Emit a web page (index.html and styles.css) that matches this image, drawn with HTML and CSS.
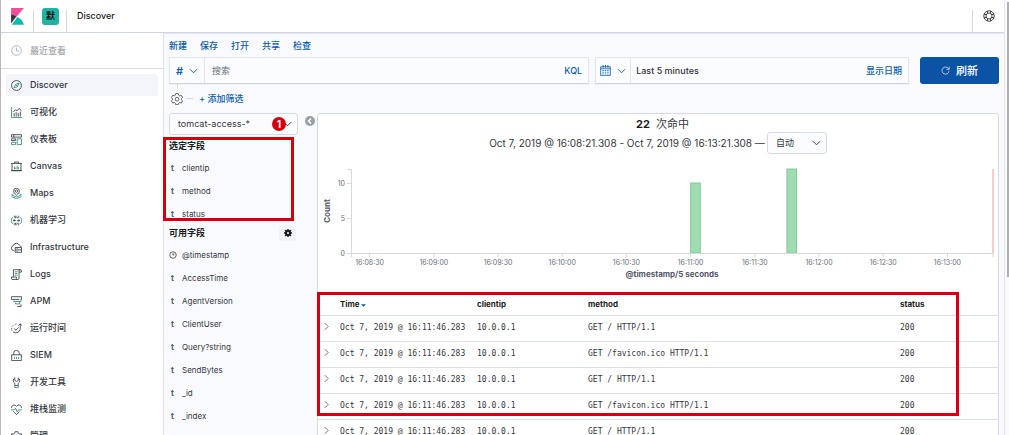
FILE: index.html
```html
<!DOCTYPE html>
<html lang="zh-CN">
<head>
<meta charset="utf-8">
<title>Discover - Kibana</title>
<link rel="stylesheet" href="styles.css">
</head>
<body>
<div class="app">
  <header class="header">
    <a class="logo" href="#" aria-label="Kibana">
      <svg viewBox="0 0 24 32" width="13" height="17"><path fill="#f04e98" d="M0 0v28.8L24 0z"/><path fill="#343741" d="M0 12v16.8l9.5-13.4A24 24 0 0 0 0 12z"/><path fill="#00bfb3" d="M12 17 1 31.5h23C23 25.500 18 20 12 17z"/></svg>
    </a>
    <button class="space" type="button"><span class="space-badge">默</span></button>
    <span class="crumb">Discover</span>
    <button class="help" type="button" aria-label="Help">
      <svg class="icon" viewBox="0 0 16 16"><circle cx="8" cy="8" r="7"/><circle cx="8" cy="8" r="4"/><path d="M6 1.500v3M10 1.500v3M6 11.500v3M10 11.500v3M1.500 6h3M1.500 10h3M11.500 6h3M11.500 10h3"/></svg>
    </button>
  </header>

  <nav class="nav">
    <a class="nav-item recent" href="#"><svg class="icon" viewBox="0 0 16 16"><circle cx="8" cy="8" r="7"/><path d="M8 3.500V8.500h4"/></svg>最近查看</a>
    <div class="nav-list">
      <a class="nav-item active" href="#"><svg class="icon" viewBox="0 0 16 16"><circle cx="8" cy="8" r="7.200"/><path class="teal" d="M11.500 4.500 9.500 9.500 4.500 11.500 6.500 6.500zM7 7l2 2"/></svg>Discover</a>
      <a class="nav-item" href="#"><svg class="icon" viewBox="0 0 16 16"><path class="teal" d="M.6 0v15.400H16"/><path d="M3 7.500 6.500 4 9 5.500 12 2l3 3.500M4.500 9v5M7.500 7.500v6.500M10.500 8.500v5.500M13.500 6.500v7.500"/></svg>可视化</a>
      <a class="nav-item" href="#"><svg class="icon" viewBox="0 0 16 16"><path d="M.6 1h14.800v3.500H.6zM4 1v3.500M.6 7h6v2.500h-6z"/><path class="teal" d="M.6 12h6v3.400h-6zM9 7h6.400v8.400H9z"/></svg>仪表板</a>
      <a class="nav-item" href="#"><svg class="icon" viewBox="0 0 16 16"><path d="M0 3.500h16M1.500 3.500v10.500h13V3.500M0 14h16M5 3.500V1.500h6v2"/><path class="teal" d="M5 8v4M7 9.500V12M9 7v5M11 9v3"/></svg>Canvas</a>
      <a class="nav-item" href="#"><svg class="icon" viewBox="0 0 16 16"><path d="M8 10.500C5 8 3.800 6.500 3.800 4.500a4.200 4.200 0 0 1 8.400 0c0 2-1.200 3.500-4.200 6z"/><circle cx="8" cy="4.500" r="1.800"/><path class="teal" d="M3.500 8.500.8 10 8 13.200 15.200 10l-2.700-1.500M.8 12.500 8 15.600l7.200-3.100"/></svg>Maps</a>
      <a class="nav-item" href="#"><svg class="icon" viewBox="0 0 16 16"><path class="teal" d="M3.500 3C1 4 .6 6 .6 8s.4 4 2.900 5M12.500 3C15 4 15.400 6 15.400 8s-.4 4-2.900 5M4.500 6v4M11.500 6v4"/><path d="M5.500 1v3h1.800V1M8.800 4h1.800V1M5.500 15v-3h1.800v3M8.800 12h1.800v3M3 8h4M9 8h4"/></svg>机器学习</a>
      <a class="nav-item" href="#"><svg class="icon" viewBox="0 0 16 16"><path d="M4 12.500A3.700 3.700 0 0 1 3.500 5.200 4.500 4.500 0 0 1 12 4.500c1.500.5 2.500 1.700 2.500 3"/><path d="M6 8h9.400v7H6zM6 11.500h9.400"/><path class="teal" d="M8 9.800h2M8 13.300h2"/></svg>Infrastructure</a>
      <a class="nav-item" href="#"><svg class="icon" viewBox="0 0 16 16"><path d="M3.500 11.500V1h10a1.700 1.700 0 0 1 1.700 1.700V4.500h-3.500v8.500a2.300 2.300 0 0 1-2.300 2.300H2A1.600 1.600 0 0 1 .6 13.700v-2h7.200v2a1.600 1.600 0 0 0 1.600 1.600M11.700 4.500V2.700A1.700 1.700 0 0 1 13.500 1"/><path class="teal" d="M5.500 4h4M5.500 6.500h4M5.500 9h4"/></svg>Logs</a>
      <a class="nav-item" href="#"><svg class="icon" viewBox="0 0 16 16"><path d="M12 5H.6V1h14.800v4H14M9 15.400h5.500V12"/><path class="teal" d="M4 6.500V8h10.500V5M6.500 9.500V11.500h6V8"/></svg>APM</a>
      <a class="nav-item" href="#"><svg class="icon" viewBox="0 0 16 16"><path d="M13.500 1.500v6A6.500 6.500 0 0 1 3 13M10.800 3.800 13.500 1l2.300 2.800M4.500 8l2.500 2.500 4-4"/><path class="teal" d="M1.500 11.500A6.500 6.500 0 0 1 1 7M2 5l1.500-1.800M5.500 2 8 1.500"/></svg>运行时间</a>
      <a class="nav-item" href="#"><svg class="icon" viewBox="0 0 16 16"><path d="M1 7h14v8.400H1zM4 7V4.500a4 4 0 0 1 8 0V7"/><path class="teal" d="M5 10v3M8 10v3M11 10v3"/></svg>SIEM</a>
      <a class="nav-item" href="#"><svg class="icon" viewBox="0 0 16 16"><path d="M5.500 1.200A4.500 4.500 0 0 0 5.500 9v3.500h5V9a4.500 4.500 0 0 0 0-7.800V5L8 6.500 5.500 5z"/><path class="teal" d="M5.500 13v2.400h5V13"/></svg>开发工具</a>
      <a class="nav-item" href="#"><svg class="icon" viewBox="0 0 16 16"><path d="M1 6C.2 1.500 5.500 0 8 3.500 10.500 0 15.800 1.500 15 6M3.500 11 8 15.400l4.500-4.400"/><path class="teal" d="M0 8.500h4.500L6.500 6l2.500 5.500 2-3h5"/></svg>堆栈监测</a>
      <a class="nav-item" href="#"><svg class="icon" viewBox="0 0 16 16"><path d="M6 1h4l.5 2.200L13 4.500l2.200-.5V8l-2 1 .2 2.500-2.400 2-1 2H6l-1-2-2.400-2L2.800 9l-2-1V4l2.200.5 2.500-1.300z"/><circle class="teal" cx="8" cy="8.500" r="2.500"/></svg>管理</a>
    </div>
  </nav>

  <main class="main">
    <div class="menu">
      <a href="#">新建</a><a href="#">保存</a><a href="#">打开</a><a href="#">共享</a><a href="#">检查</a>
    </div>

    <div class="toolbar">
      <div class="query box">
        <button class="addon saved" type="button" aria-label="Saved queries"><b>#</b><svg class="chev" viewBox="0 0 10 6"><path d="m1 1 4 4 4-4"/></svg></button>
        <input class="search" type="text" placeholder="搜索" aria-label="搜索">
        <button class="text-button" type="button">KQL</button>
      </div>
      <div class="dates box">
        <button class="addon quick" type="button" aria-label="Quick dates"><svg class="icon" viewBox="0 0 16 16"><path d="M1 2.500h14v13H1zM1 5.500h14M4.500 0v4M11.500 0v4M8 0v4M3.500 8h2M7 8h2M10.500 8h2M3.500 10.500h2M7 10.500h2M10.500 10.500h2M3.500 13h2M7 13h2M10.500 13h2"/></svg><svg class="chev" viewBox="0 0 10 6"><path d="m1 1 4 4 4-4"/></svg></button>
        <button class="range" type="button">Last 5 minutes</button>
        <button class="text-button" type="button">显示日期</button>
      </div>
      <button class="refresh" type="button"><svg class="icon" viewBox="0 0 16 16"><path d="M13.500 5A6.300 6.300 0 1 0 14.300 9M14.500 1v5H9.500"/></svg>刷新</button>
    </div>

    <div class="filters">
      <button class="filter-gear" type="button" aria-label="Filter options"><svg class="icon" viewBox="0 0 16 16"><path d="M6.300.8h3.400l.5 2.100 1.500.9 2.100-.7 1.600 3-1.500 1.400v1.500l1.500 1.400-1.600 3-2.100-.7-1.500.9-.5 2H6.300l-.5-2-1.500-.9-2.100.7-1.600-3L2.100 9V7.500L.6 6.100l1.600-3 2.100.7 1.500-.9z"/><circle cx="8" cy="8.200" r="2.500"/></svg></button>
      <span class="dash"></span>
      <a href="#">+ 添加筛选</a>
    </div>

    <div class="content">
      <aside class="fields">
        <div class="picker">
          <select class="select" aria-label="Index pattern"><option>tomcat-access-*</option></select>
          <svg class="chev" viewBox="0 0 10 6"><path d="m1 1 4 4 4-4"/></svg>
          <span class="step">1</span>
        </div>
        <section class="selected">
          <h2>选定字段</h2>
          <ul>
            <li><b>t</b>clientip</li>
            <li><b>t</b>method</li>
            <li><b>t</b>status</li>
          </ul>
          <div class="mark mark-fields"></div>
        </section>
        <section>
          <div class="fields-head">
            <h2>可用字段</h2>
            <button class="field-gear" type="button" aria-label="Field filter"><svg viewBox="0 0 16 16" width="8" height="8"><circle cx="8" cy="8" r="4" fill="none" stroke="#1a1c21" stroke-width="4"/><path d="M8 0v4M8 12v4M0 8h4M12 8h4M2.300 2.300l3 3M10.700 10.700l3 3M2.300 13.700l3-3M10.700 5.300l3-3" stroke="#1a1c21" stroke-width="3"/></svg></button>
          </div>
          <ul>
            <li><svg class="clock" viewBox="0 0 16 16"><circle cx="8" cy="8" r="6.500"/><path d="M8 4v4.500l3-2"/></svg>@timestamp</li>
            <li><b>t</b>AccessTime</li>
            <li><b>t</b>AgentVersion</li>
            <li><b>t</b>ClientUser</li>
            <li><b>t</b>Query?string</li>
            <li><b>t</b>SendBytes</li>
            <li><b>t</b>_id</li>
            <li><b>t</b>_index</li>
          </ul>
        </section>
      </aside>

      <button class="collapse" type="button" aria-label="Collapse fields"><svg viewBox="0 0 10 10" width="10" height="10"><circle cx="5" cy="5" r="5" fill="#98a0a8"/><path d="M6 2.500 3.500 5 6 7.500" fill="none" stroke="#fff" stroke-width="1.500"/></svg></button>

      <section class="panel">
        <div class="hits"><strong>22</strong>次命中</div>
        <div class="timeline">
          <label for="interval">Oct 7, 2019 @ 16:08:21.308 - Oct 7, 2019 @ 16:13:21.308 —</label>
          <div class="interval">
            <select class="select" id="interval"><option>自动</option></select>
            <svg class="chev" viewBox="0 0 10 6"><path d="m1 1 4 4 4-4"/></svg>
          </div>
        </div>

        <div class="chart">
          <svg class="plot" role="img" aria-label="Count by @timestamp">
            <g class="bars">
              <rect x="52.9%" y="14" width="1.500%" height="70"/>
              <rect x="67.900%" y="0" width="1.500%" height="84"/>
            </g>
            <line class="now" x1="100%" x2="100%" y1="0" y2="84"/>
            <g class="axis">
              <path d="M-4 .5H.5V88M-4 14.500H0M-4 49.500H0M-4 84.500H0"/>
              <line x1="0" x2="100%" y1="84.500" y2="84.500"/>
              <line x1="2.900%" x2="2.900%" y1="84" y2="88"/><line x1="12.900%" x2="12.900%" y1="84" y2="88"/>
              <line x1="22.900%" x2="22.900%" y1="84" y2="88"/><line x1="32.900%" x2="32.900%" y1="84" y2="88"/>
              <line x1="42.900%" x2="42.900%" y1="84" y2="88"/><line x1="52.900%" x2="52.900%" y1="84" y2="88"/>
              <line x1="62.900%" x2="62.900%" y1="84" y2="88"/><line x1="72.900%" x2="72.900%" y1="84" y2="88"/>
              <line x1="82.900%" x2="82.900%" y1="84" y2="88"/><line x1="92.900%" x2="92.900%" y1="84" y2="88"/>
              <line x1="100%" x2="100%" y1="84" y2="88"/>
            </g>
            <g class="ylabels"><text x="-6" y="17">10</text><text x="-6" y="52">5</text><text x="-6" y="87">0</text></g>
            <g class="xlabels">
              <text x="2.900%" y="96">16:08:30</text><text x="12.900%" y="96">16:09:00</text><text x="22.900%" y="96">16:09:30</text><text x="32.900%" y="96">16:10:00</text><text x="42.900%" y="96">16:10:30</text><text x="52.900%" y="96">16:11:00</text><text x="62.900%" y="96">16:11:30</text><text x="72.900%" y="96">16:12:00</text><text x="82.900%" y="96">16:12:30</text><text x="92.900%" y="96">16:13:00</text>
            </g>
            <text class="title" x="50%" y="108">@timestamp/5 seconds</text>
            <text class="title" transform="translate(-21 42) rotate(-90)">Count</text>
          </svg>
        </div>

        <div class="docs">
          <table>
            <colgroup><col class="c-open"><col class="c-time"><col class="c-ip"><col><col class="c-status"></colgroup>
            <thead><tr><th></th><th>Time <svg viewBox="0 0 6 3" width="5" height="3"><path d="M0 0h6L3 3z" fill="#0b5cad"/></svg></th><th>clientip</th><th>method</th><th>status</th></tr></thead>
            <tbody>
              <tr><td><button class="open" type="button" aria-label="Expand"><svg viewBox="0 0 6 10"><path d="m1 1 4 4-4 4"/></svg></button></td><td>Oct 7, 2019 @ 16:11:46.283</td><td>10.0.0.1</td><td>GET / HTTP/1.1</td><td>200</td></tr>
              <tr><td><button class="open" type="button" aria-label="Expand"><svg viewBox="0 0 6 10"><path d="m1 1 4 4-4 4"/></svg></button></td><td>Oct 7, 2019 @ 16:11:46.283</td><td>10.0.0.1</td><td>GET /favicon.ico HTTP/1.1</td><td>200</td></tr>
              <tr><td><button class="open" type="button" aria-label="Expand"><svg viewBox="0 0 6 10"><path d="m1 1 4 4-4 4"/></svg></button></td><td>Oct 7, 2019 @ 16:11:46.283</td><td>10.0.0.1</td><td>GET / HTTP/1.1</td><td>200</td></tr>
              <tr><td><button class="open" type="button" aria-label="Expand"><svg viewBox="0 0 6 10"><path d="m1 1 4 4-4 4"/></svg></button></td><td>Oct 7, 2019 @ 16:11:46.283</td><td>10.0.0.1</td><td>GET /favicon.ico HTTP/1.1</td><td>200</td></tr>
              <tr><td><button class="open" type="button" aria-label="Expand"><svg viewBox="0 0 6 10"><path d="m1 1 4 4-4 4"/></svg></button></td><td>Oct 7, 2019 @ 16:11:46.283</td><td>10.0.0.1</td><td>GET / HTTP/1.1</td><td>200</td></tr>
            </tbody>
          </table>
          <div class="mark mark-docs"></div>
        </div>
      </section>
    </div>
  </main>
  <div class="scrollbar"><div class="thumb"></div></div>
</div>
</body>
</html>
```

FILE: styles.css
```css
* { box-sizing: border-box; }
body {
  margin: 0;
  font: 9px/12px Inter, "Noto Sans CJK SC", sans-serif;
  color: #343741;
  background: #fff;
}
a { color: #0b5cad; text-decoration: none; }
button, input, select { font: inherit; color: inherit; margin: 0; padding: 0; border: 0; background: none; }
ul { list-style: none; margin: 0; padding: 0; }
h2 { margin: 0; font-size: 9px; line-height: 20px; color: #1a1c21; }

.app {
  display: grid;
  grid-template: 33px minmax(0, 1fr) / 163px minmax(0, 1fr) 5px;
  height: 100vh;
  overflow: hidden;
  border-left: 1px solid #b8b8b8;
}
.icon, .chev, .clock { flex: none; fill: none; stroke: currentColor; stroke-width: 1.2; }
.icon { width: 11px; height: 11px; }
.chev { width: 9px; height: 6px; stroke-width: 1; }
.teal { stroke: #26857c; }

.header {
  grid-column: 1 / 3;
  display: flex;
  align-items: center;
  border-bottom: 1px solid #cdd4e2;
  background: #fff;
}
.logo { display: flex; width: 32px; padding-left: 10px; }
.space, .help { align-self: flex-end; height: 22px; border-left: 1px solid #d3dae6; }
.space { display: flex; width: 34px; padding-left: 8px; border-right: 1px solid #d3dae6; }
.space-badge {
  width: 17px;
  height: 17px;
  margin-top: -2px;
  border-radius: 3px;
  background: #20b2a2;
  color: #111;
  font-weight: 700;
  line-height: 16px;
}
.crumb { padding-left: 10px; font-weight: 500; color: #1a1c21; }
.help { width: 32px; margin-left: auto; padding-bottom: 10px; }
.help .icon { width: 12px; height: 12px; vertical-align: top; }

.nav { border-right: 1px solid #dfe4ec; background: #fff; overflow: hidden; }
.nav-item {
  display: flex;
  align-items: center;
  gap: 8px;
  height: 22px;
  padding-left: 5px;
  border-radius: 3px;
  font-weight: 500;
  color: #343741;
}
.recent {
  height: 36px;
  padding-left: 10px;
  border-radius: 0;
  border-bottom: 1px solid #d3dae6;
  color: #a6a8ad;
}
.nav-list { display: grid; gap: 5px; padding: 5px; }
.active { background: #f2f5fa; }

.main { display: flex; flex-direction: column; padding: 5px 5px 0; background: #f9fafd; border-top: 1px solid #e4e8f1; }
.menu { display: flex; gap: 13px; height: 18px; line-height: 14px; font-weight: 500; }
.toolbar { display: flex; height: 27px; }
.box { display: flex; border: 1px solid #e2e6ee; border-bottom-color: #cfd5e0; background: #fbfcfd; box-shadow: 0 1px 1px #d3dae644; }
.query { flex: 421; margin-right: 6px; }
.dates { flex: 314; margin-right: 11px; }
.addon { display: flex; align-items: center; justify-content: center; gap: 6px; width: 35px; border-right: 1px solid #e2e6ee; color: #0b5cad; }
.addon b { font-size: 11px; font-weight: 600; }
.search { flex: 1; min-width: 0; padding-left: 7px; outline: 0; }
.search::placeholder { color: #69707d; opacity: 1; }
.text-button { padding: 0 6px; font-weight: 500; color: #0b5cad; }
.range { flex: 1; padding-left: 5px; text-align: left; font-weight: 500; }
.refresh {
  display: flex;
  align-items: center;
  justify-content: center;
  gap: 6px;
  width: 79px;
  border-radius: 3px;
  background: #0a53a5;
  color: #fff;
  font-size: 11px;
  font-weight: 500;
}
.refresh .icon { width: 9px; height: 9px; }

.filters { display: flex; align-items: center; gap: 3px; height: 29px; padding: 0 0 0 2px; font-weight: 500; }
.filter-gear { position: relative; display: flex; }
.filter-gear::before { content: ""; position: absolute; left: 6px; bottom: 16px; width: 1px; height: 5px; background: #d3dae6; }
.filter-gear .icon { width: 12px; height: 12px; stroke-width: 1; }
.dash { width: 7px; height: 1px; margin-right: 3px; background: #d3dae6; }

.content { display: flex; align-items: flex-start; flex: 1; min-height: 0; }
.fields { width: 129px; }
.picker, .interval { position: relative; height: 22px; }
.select {
  display: block;
  width: 100%;
  height: 100%;
  padding-left: 8px;
  appearance: none;
  border: 1px solid #d5dae8;
  border-radius: 3px;
  background: #fbfcfd;
  color: #343741;
}
.picker .chev, .interval .chev { position: absolute; right: 6px; top: 8px; pointer-events: none; }
.step {
  position: absolute;
  left: 103px;
  top: 4px;
  width: 14px;
  height: 14px;
  border-radius: 50%;
  background: #d7000f;
  color: #fff;
  font-size: 10px;
  font-weight: 700;
  line-height: 14px;
  text-align: center;
}
.selected { position: relative; padding-top: 1px; }
.fields li { display: flex; align-items: center; height: 23px; font-size: 8px; }
.fields li b { width: 13px; padding-left: 2px; color: #535966; }
.clock { width: 8px; height: 8px; margin-right: 5px; stroke-width: 1.5; }
.fields-head { display: flex; justify-content: space-between; align-items: center; height: 16px; margin-bottom: 2px; }
.field-gear { display: grid; place-items: center; width: 17px; height: 15px; margin-right: 2px; border-radius: 2px; background: #f0f3f8; }
.mark { position: absolute; border: 3px solid #d7000f; pointer-events: none; }
.mark-fields { left: -6px; right: 4px; top: 2px; bottom: 4px; }

.collapse { display: flex; width: 19px; padding: 3px 0 0 7px; }
.panel { flex: 1; min-width: 0; border: 1px solid #d5dae8; border-radius: 3px 3px 0 0; background: #fff; }
.hits { display: flex; justify-content: center; gap: 6px; height: 18px; padding-left: 9px; font-size: 11px; line-height: 20px; }
.hits strong { color: #1a1c21; }
.timeline { display: flex; align-items: center; justify-content: center; gap: 2px; }
.timeline label { font-size: 10px; }
.interval { width: 60px; }
.chart { height: 139px; padding: 15px 5px 0 33px; }
.plot { display: block; width: 100%; height: 84px; overflow: visible; }
.bars rect { fill: #a0dcb2; stroke: #7fcc97; }
.now { stroke: #ee9a9f; stroke-width: 1; }
.axis { fill: none; stroke: #d9d9d9; }
.plot text { font-size: 7px; fill: #69707d; }
.ylabels { text-anchor: end; }
.xlabels, .title { text-anchor: middle; }
.plot .title { font-size: 8px; font-weight: 700; fill: #535966; }

.docs { position: relative; }
table { width: 100%; table-layout: fixed; border-collapse: collapse; }
.c-open { width: 22px; }
.c-time { width: 137px; }
.c-ip { width: 111px; }
.c-status { width: 98px; }
th, td { padding: 0; text-align: left; white-space: nowrap; border-bottom: 1px solid #d8dfe9; }
th { height: 22px; font-size: 8px; font-weight: 700; color: #1a1c21; }
td { height: 26px; padding-bottom: 1px; font-family: "DejaVu Sans Mono", monospace; font-size: 8px; }
.open { display: block; padding: 0 0 2px 6px; }
.open svg { display: block; width: 5px; height: 9px; fill: none; stroke: #535966; }
.mark-docs { left: -1px; right: 39px; top: -1px; height: 124px; }

.scrollbar { grid-area: 1 / 3 / 3 / 4; border-left: 1px solid #e3e5ea; background: #fafafc; }
.thumb { width: 2px; height: 275px; margin: 2px 0 0 auto; background: #b0b0b0; }
```
